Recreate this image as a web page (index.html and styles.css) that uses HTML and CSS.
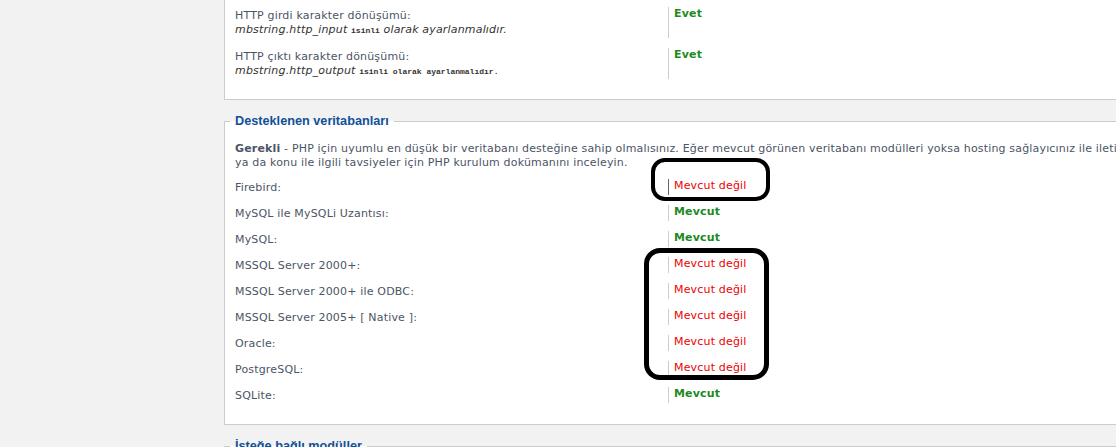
FILE: index.html
```html
<!DOCTYPE html>
<html lang="tr">
<head>
    <meta charset="UTF-8">
    <title>Kurulum - Gereksinimler</title>
    <link rel="stylesheet" href="styles.css">
</head>
<body>

<div class="page">
    <!-- PHP ayarlari (ust kisim ekran disinda) -->
    <fieldset class="box cut">
        <div class="rows">
            <dl class="row">
                <dt>HTTP girdi karakter dönüşümü:<br><em>mbstring.http_input <code>isinli</code> olarak ayarlanmalıdır.</em></dt>
                <dd><strong class="ok">Evet</strong></dd>
            </dl>
            <dl class="row">
                <dt>HTTP çıktı karakter dönüşümü:<br><em>mbstring.http_output <code>isinli olarak ayarlanmalıdır.</code></em></dt>
                <dd><strong class="ok">Evet</strong></dd>
            </dl>
        </div>
    </fieldset>

    <!-- Veritabanlari -->
    <fieldset class="box">
        <legend>Desteklenen veritabanları</legend>
        <p class="note"><strong>Gerekli</strong> - PHP için uyumlu en düşük bir veritabanı desteğine sahip olmalısınız. Eğer mevcut görünen veritabanı modülleri yoksa hosting sağlayıcınız ile iletişime geçin<br>ya da konu ile ilgili tavsiyeler için PHP kurulum dokümanını inceleyin.</p>
        <div class="rows">
            <dl class="row dark">
                <dt>Firebird:</dt>
                <dd><span class="no">Mevcut değil</span></dd>
            </dl>
            <dl class="row">
                <dt>MySQL ile MySQLi Uzantısı:</dt>
                <dd><strong class="ok">Mevcut</strong></dd>
            </dl>
            <dl class="row">
                <dt>MySQL:</dt>
                <dd><strong class="ok">Mevcut</strong></dd>
            </dl>
            <dl class="row">
                <dt>MSSQL Server 2000+:</dt>
                <dd><span class="no">Mevcut değil</span></dd>
            </dl>
            <dl class="row">
                <dt>MSSQL Server 2000+ ile ODBC:</dt>
                <dd><span class="no">Mevcut değil</span></dd>
            </dl>
            <dl class="row">
                <dt>MSSQL Server 2005+ [ Native ]:</dt>
                <dd><span class="no">Mevcut değil</span></dd>
            </dl>
            <dl class="row">
                <dt>Oracle:</dt>
                <dd><span class="no">Mevcut değil</span></dd>
            </dl>
            <dl class="row">
                <dt>PostgreSQL:</dt>
                <dd><span class="no">Mevcut değil</span></dd>
            </dl>
            <dl class="row">
                <dt>SQLite:</dt>
                <dd><strong class="ok">Mevcut</strong></dd>
            </dl>
        </div>
    </fieldset>

    <!-- Istege bagli moduller -->
    <fieldset class="box">
        <legend>İsteğe bağlı modüller</legend>
        <div class="rows">
            <dl class="row">
                <dt>zlib Sıkıştırma Desteği:</dt>
                <dd><strong class="ok">Mevcut</strong></dd>
            </dl>
        </div>
    </fieldset>
</div>

<!-- elle cizilmis isaretler -->
<div class="mark mark-one"></div>
<div class="mark mark-two"></div>

</body>
</html>
```

FILE: styles.css
```css
html, body {
    margin: 0;
    padding: 0;
    overflow: hidden;
}
body {
    background: #f2f2f2;
    font-family: "DejaVu Sans", Verdana, sans-serif;
    font-size: 11px;
    line-height: 14px;
    letter-spacing: 0.17px;
    color: #4b5566;
}
.page {
    width: 1400px;
    padding-left: 224px;
}

/* fieldset kutulari */
.box {
    margin: 0 0 14px;
    padding: 14px 5px 21px;
    border: 1px solid #ccc;
    background: #fff;
}
.box.cut {
    border-top: none;
    padding-top: 7px;
    padding-bottom: 20px;
    margin-bottom: 14px;
}
.box legend {
    padding: 0 5px;
    font-family: "Liberation Sans", Arial, sans-serif;
    font-size: 12.7px;
    font-weight: bold;
    letter-spacing: 0;
    color: #115098;
}

.note {
    margin: 0 0 9px;
    padding: 0 5px;
}

/* satirlar */
.rows {
    display: flex;
    flex-direction: column;
    gap: 10px;
    padding: 0 5px;
}
.row {
    display: flex;
    margin: 0;
}
.row dt {
    width: 433px;
    padding-top: 2px;
}
.row dt em {
    color: #333;
}
.row dt code {
    font-family: "Liberation Mono", monospace;
    font-size: 8px;
    font-style: normal;
    font-weight: bold;
    letter-spacing: 0;
    color: #333;
}
.row dd {
    margin: 0;
    padding-left: 5px;
    border-left: 1px solid #ccc;
}
.row.dark dd {
    border-left-color: #666;
}

.ok {
    color: #1e8a1e;
}
.no {
    color: #ee0000;
}

/* isaretler */
.mark {
    position: absolute;
    border: 4px solid #000;
    border-radius: 14px;
}
.mark-one {
    left: 651px;
    top: 158px;
    width: 111px;
    height: 35px;
}
.mark-two {
    left: 644px;
    top: 248px;
    width: 115px;
    height: 122px;
    border-width: 5px;
    border-radius: 16px;
}
```
